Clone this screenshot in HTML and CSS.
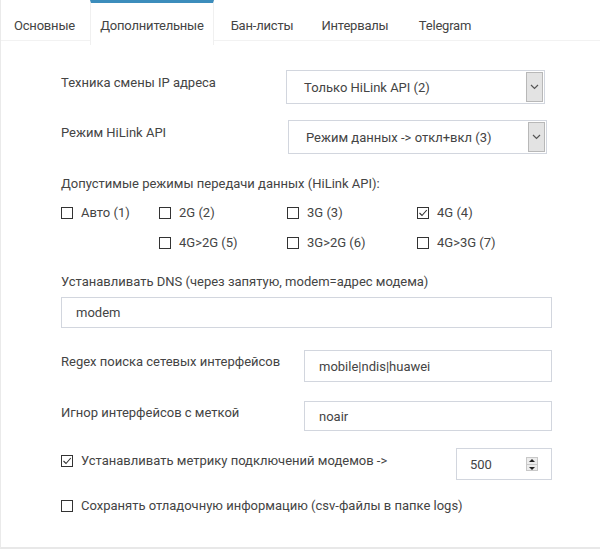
FILE: index.html
```html
<!doctype html>
<html>
<head>
<meta charset="utf-8">
<title>Дополнительные</title>
<link rel="stylesheet" href="styles.css">
</head>
<body>
<div class="box">
  <ul class="tabs">
    <li class="t1">Основные</li>
    <li class="t2 active">Дополнительные</li>
    <li class="t3">Бан-листы</li>
    <li class="t4">Интервалы</li>
    <li class="t5">Telegram</li>
  </ul>
  <div class="pane">
    <div class="row row-sel1">
      <label class="lbl">Техника смены IP адреса</label>
      <div class="select">
        <span class="val">Только HiLink API (2)</span>
        <span class="arrow"><svg width="9" height="6" viewBox="0 0 9 6"><polyline points="1,1 4.5,4.5 8,1" fill="none" stroke="#555" stroke-width="1.2"/></svg></span>
      </div>
    </div>
    <div class="row row-sel2">
      <label class="lbl">Режим HiLink API</label>
      <div class="select">
        <span class="val">Режим данных -&gt; откл+вкл (3)</span>
        <span class="arrow"><svg width="9" height="6" viewBox="0 0 9 6"><polyline points="1,1 4.5,4.5 8,1" fill="none" stroke="#555" stroke-width="1.2"/></svg></span>
      </div>
    </div>

    <div class="title">Допустимые режимы передачи данных (HiLink API):</div>
    <div class="modes">
      <label class="cb"><span class="box-cb"></span>Авто (1)</label>
      <label class="cb"><span class="box-cb"></span>2G (2)</label>
      <label class="cb"><span class="box-cb"></span>3G (3)</label>
      <label class="cb"><span class="box-cb on"><svg width="10" height="10" viewBox="0 0 10 10"><polyline points="1.5,5 4,7.5 8.8,2" fill="none" stroke="#333" stroke-width="1.1"/></svg></span>4G (4)</label>
      <span></span>
      <label class="cb"><span class="box-cb"></span>4G&gt;2G (5)</label>
      <label class="cb"><span class="box-cb"></span>3G&gt;2G (6)</label>
      <label class="cb"><span class="box-cb"></span>4G&gt;3G (7)</label>
    </div>

    <div class="title dns-title">Устанавливать DNS (через запятую, modem=адрес модема)</div>
    <div class="input wide">modem</div>

    <div class="row row-in">
      <label class="lbl">Regex поиска сетевых интерфейсов</label>
      <div class="input">mobile|ndis|huawei</div>
    </div>
    <div class="row row-in2">
      <label class="lbl">Игнор интерфейсов с меткой</label>
      <div class="input">noair</div>
    </div>

    <div class="row row-num">
      <label class="cb"><span class="box-cb on"><svg width="10" height="10" viewBox="0 0 10 10"><polyline points="1.5,5 4,7.5 8.8,2" fill="none" stroke="#333" stroke-width="1.1"/></svg></span>Устанавливать метрику подключений модемов -&gt;</label>
      <div class="number">
        <span class="val">500</span>
        <span class="spin">
          <span class="up"></span>
          <span class="down"></span>
        </span>
      </div>
    </div>

    <label class="cb debug"><span class="box-cb"></span>Сохранять отладочную информацию (csv-файлы в папке logs)</label>
  </div>
</div>
</body>
</html>
```

FILE: styles.css
```css
*{margin:0;padding:0;box-sizing:border-box}
body{background:#fff;font-family:Roboto,"Liberation Sans",sans-serif;color:#444;font-size:13px}

.box{width:600px;height:549px;border-left:1px solid #eaeaea;border-bottom:2px solid #e8e8e8}

.tabs{display:flex;list-style:none;height:41px;border-bottom:1px solid #f2f2f2}
.tabs li{padding:13px 0 4px;line-height:20px;font-size:13px;letter-spacing:-0.2px;color:#444;border-top:3px solid transparent;text-align:center}
.tabs .t1{width:87px;margin-right:2px}
.tabs .t2{width:124px}
.tabs .t3{width:96px}
.tabs .t4{width:90px}
.tabs .t5{width:90px}
.tabs li.active{border-top-color:#3c8dbc;border-left:1px solid #f0f0f0;border-right:1px solid #f0f0f0;background:#fff;height:45px;position:relative;z-index:1}

.pane{padding:29px 0 0 60px}

.row{display:flex;align-items:flex-start}
.lbl{display:block;line-height:16px}

.row-sel1 .lbl{width:225px;padding-top:5px}
.row-sel2{margin-top:16px}
.row-sel2 .lbl{width:227px;padding-top:5px}

.select{display:flex;align-items:center;width:259px;height:34px;border:1px solid #d2d6de;padding:1px}
.select .val{flex:1;padding-left:16px;color:#444}
.select .arrow{display:flex;align-items:center;justify-content:center;width:17px;height:100%;background:#e3e3e3;border:1px solid #b8b8b8}

.title{margin-top:22px;line-height:16px}

.modes{display:grid;grid-template-columns:98px 128px 130px auto;row-gap:14px;margin-top:13px}
.cb{display:flex;align-items:center;line-height:16px}
.box-cb{display:flex;align-items:center;justify-content:center;width:12px;height:12px;border:1px solid #333;margin-right:8px;flex:none}

.dns-title{margin-top:23px}
.input{display:flex;align-items:center;height:31px;border:1px solid #d2d6de;padding-left:14px;color:#444}
.input.wide{width:491px;margin-top:7px}

.row-in{margin-top:22px}
.row-in2{margin-top:19px}
.row-in .lbl,.row-in2 .lbl{width:243px;padding-top:4px}
.row-in .input,.row-in2 .input{width:248px;height:32px}
.row-in2 .input{height:30px}

.row-num{margin-top:17px;justify-content:space-between;width:491px}
.row-num .cb{margin-top:5px}
.number{display:flex;align-items:center;width:96px;height:32px;border:1px solid #d2d6de;padding-left:13px}
.number .val{flex:1}
.spin{display:flex;flex-direction:column;width:12px;height:14px;margin-right:13px;border:1px solid #c8c8c8;background:#ececec}
.spin span{flex:1;position:relative}
.spin .up{border-bottom:1px solid #c8c8c8}
.spin .up:after{content:"";position:absolute;left:2px;top:1px;border-left:3px solid transparent;border-right:3px solid transparent;border-bottom:3px solid #222}
.spin .down:after{content:"";position:absolute;left:2px;top:2px;border-left:3px solid transparent;border-right:3px solid transparent;border-top:3px solid #222}

.debug{margin-top:18px}
```
